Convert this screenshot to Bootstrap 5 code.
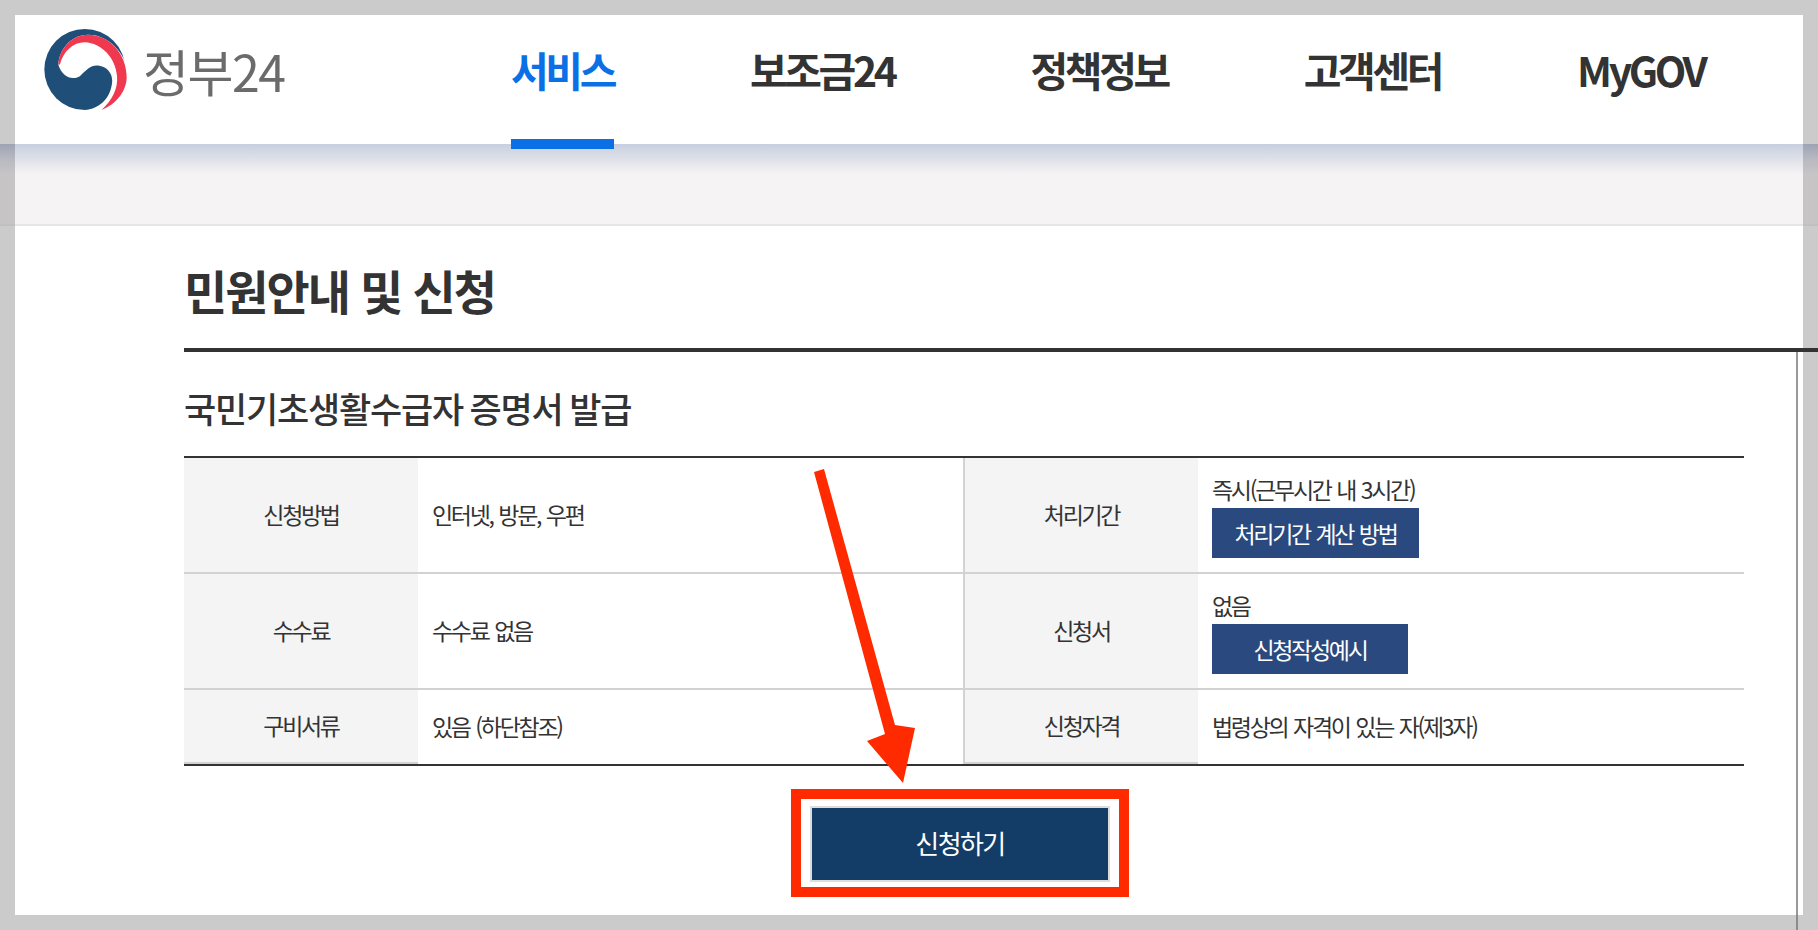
<!DOCTYPE html>
<html lang="ko">
<head>
<meta charset="utf-8">
<title>정부24</title>
<link href="https://cdn.jsdelivr.net/npm/bootstrap@5.3.0/dist/css/bootstrap.min.css" rel="stylesheet">
<style>
html,body{height:930px;overflow:hidden}
body{margin:0;background:#cbcbcb;padding:15px;font-family:"Noto Sans CJK KR","Noto Sans",sans-serif;color:#333}
.gov-frame{height:900px;background:#fff;position:relative}
.gov-head{height:129px;background:#fff;position:relative;z-index:2}
.gov-logo{width:83px;height:82px;margin:14px 0 0 29px;flex:none}
.gov-word{font-size:50px;line-height:1;color:#6b6b6b;letter-spacing:-1.500px;margin:30px 0 0 16px;width:368px;flex:none}
.gov-nav{gap:136px;margin:0}
.gov-nav a{display:block;height:134px;padding-top:24px;font-size:41px;line-height:60px;font-weight:700;letter-spacing:-3.400px;color:#333;text-decoration:none;white-space:nowrap}
.gov-nav a.on{color:#0b70e6;border-bottom:10px solid #0b70e6}
.gov-band{height:82px;background:linear-gradient(#c7cfe0,#dfe1e8 15px,#f5f3f4 30px);border-bottom:2px solid #e6e6e6;position:relative}
.gov-band::before,.gov-band::after{content:"";position:absolute;top:0;bottom:-2px;width:15px;background:linear-gradient(#9ea3b4,#b8b9c0 15px,#c6c4c5 30px);border-bottom:2px solid #c0c0c0}
.gov-band::before{left:-15px}
.gov-band::after{right:-15px}
.gov-title{height:122px;margin:0 0 0 169px;font-size:47px;line-height:1;font-weight:700;letter-spacing:-2px;padding-top:40px;color:#333}
.gov-body{height:563px;margin:0 5px 0 169px;border-right:2px solid #999;padding-right:52px;position:relative}
.gov-body::after{content:"";position:absolute;right:-2px;top:100%;width:2px;height:15px;background:#8c8c8c}
.gov-rule{height:4px;background:#333;margin:0 -15px 0 169px}
.gov-sub{height:104px;margin:0;font-size:35px;line-height:1;font-weight:500;letter-spacing:-1.200px;word-spacing:-2px;padding-top:38px;color:#333}
.gov-tbl{table-layout:fixed;width:1560px;margin:0;border-collapse:separate;border-spacing:0;border-top:2px solid #333;border-bottom:2px solid #333;font-size:23px;letter-spacing:-2.300px;word-spacing:1.500px;line-height:31px;color:#333}
.gov-tbl th,.gov-tbl td{padding:0 14px 1px;vertical-align:middle;border-bottom:2px solid #d2d2d2;box-shadow:none;color:#333}
.gov-tbl th{background:#f4f4f4;font-weight:400;text-align:center}
.gov-tbl th.split{border-left:2px solid #d2d2d2}
.gov-tbl td.has-btn{padding:2px 14px 0}
.gov-tbl tr.tall>*{height:116px}
.gov-tbl tr.last>*{height:74px}
.gov-tbl tr.last td{border-bottom:0}
.gov-mini{display:block;height:50px;padding:0;margin:3px 0 0;border:0;border-radius:0;background:#2a4a7f;color:#fff;font-size:23px;line-height:50px;letter-spacing:-2.300px;word-spacing:1.500px}
.gov-mini.w1{width:207px}
.gov-mini.w2{width:196px}
.gov-mark{width:338px;height:108px;margin:23px 0 0 607px;border:10px solid #ff2a00;padding:7px 9px 5px}
.gov-go{display:block;width:300px;height:76px;padding:0;border:2px solid #ddd;border-radius:0;background:#133c66;color:#fff;font-size:26px;line-height:70px;letter-spacing:-1.600px}
.gov-arrow{position:absolute;left:0;top:0;z-index:3;pointer-events:none}
</style>
</head>
<body>
<div class="gov-frame">
  <header class="gov-head d-flex align-items-start">
    <svg class="gov-logo" viewBox="42 28 250 247" aria-hidden="true">
      <circle cx="165" cy="150" r="122" fill="#1f4e79"/>
      <path d="M85,135 C90,80 130,45 175,45 C240,45 292,105 300,175 L300,290 L170,290 L175,272 C225,258 243,225 247,190 C250,165 235,142 205,138 C185,135 170,150 150,170 C125,185 95,170 85,135 Z" fill="#fff"/>
      <path d="M85,135 C90,80 130,45 175,45 C240,45 292,105 291,175 C290,215 260,255 215,272 C250,240 265,205 262,170 C258,115 215,70 165,68 C130,68 100,95 90,135 Z" fill="#f0384f"/>
    </svg>
    <div class="gov-word">정부24</div>
    <nav class="gov-nav d-flex">
      <a class="on" href="#">서비스</a>
      <a href="#">보조금24</a>
      <a href="#">정책정보</a>
      <a href="#">고객센터</a>
      <a href="#">MyGOV</a>
    </nav>
  </header>
  <div class="gov-band"></div>
  <h1 class="gov-title">민원안내 및 신청</h1>
  <div class="gov-rule"></div>
  <main class="gov-body">
    <h2 class="gov-sub">국민기초생활수급자 증명서 발급</h2>
    <table class="table gov-tbl">
      <colgroup><col style="width:234px"><col style="width:545px"><col style="width:235px"><col style="width:546px"></colgroup>
      <tbody>
        <tr class="tall">
          <th scope="row">신청방법</th><td>인터넷, 방문, 우편</td>
          <th scope="row" class="split">처리기간</th>
          <td class="has-btn">즉시(근무시간 내 3시간)<a class="btn gov-mini w1" href="#">처리기간 계산 방법</a></td>
        </tr>
        <tr class="tall">
          <th scope="row">수수료</th><td>수수료 없음</td>
          <th scope="row" class="split">신청서</th>
          <td class="has-btn">없음<a class="btn gov-mini w2" href="#">신청작성예시</a></td>
        </tr>
        <tr class="last">
          <th scope="row">구비서류</th><td>있음 (하단참조)</td>
          <th scope="row" class="split">신청자격</th>
          <td>법령상의 자격이 있는 자(제3자)</td>
        </tr>
      </tbody>
    </table>
    <div class="gov-mark"><a class="btn gov-go" href="#">신청하기</a></div>
  </main>
  <svg class="gov-arrow" width="1788" height="900" aria-hidden="true">
    <polygon fill="#ff2a00" points="799,457 809,454 880,710 900,713 888,768 852,726 870,719"/>
  </svg>
</div>
<script src="https://cdn.jsdelivr.net/npm/bootstrap@5.3.0/dist/js/bootstrap.bundle.min.js"></script>
</body>
</html>
